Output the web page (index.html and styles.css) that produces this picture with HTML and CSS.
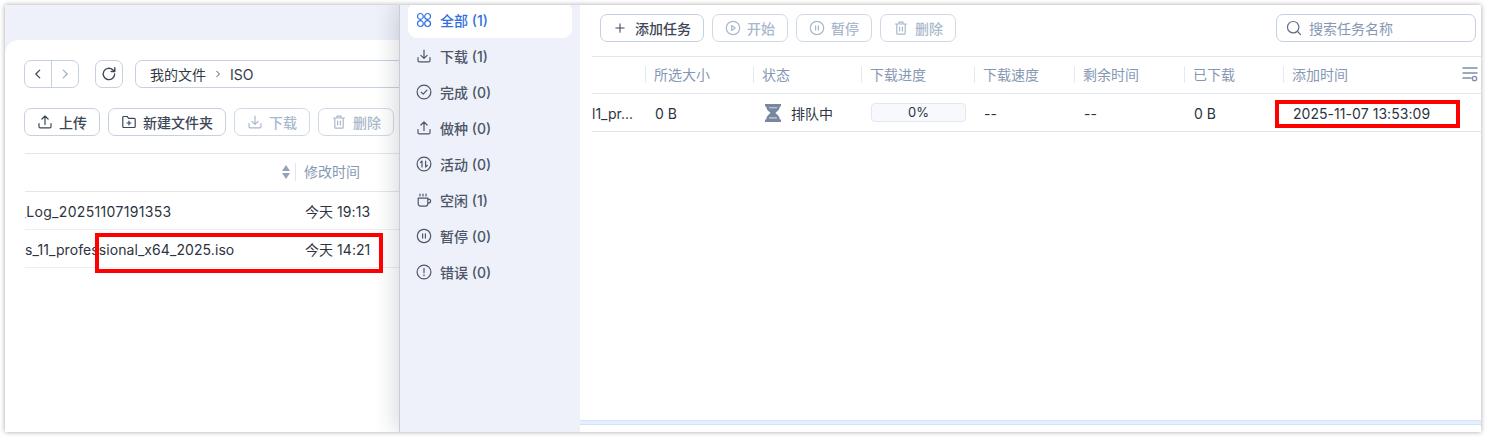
FILE: index.html
```html
<!DOCTYPE html>
<html lang="zh">
<head>
<meta charset="utf-8">
<title>下载任务</title>
<link rel="stylesheet" href="styles.css">
</head>
<body>
<svg class="defs" width="0" height="0" aria-hidden="true">
  <symbol id="i-upload" viewBox="0 0 16 16"><path d="M8 10.500V2.200M4.900 5 8 2l3.100 3M2 9.500v3.200c0 .7.5 1.200 1.200 1.200h9.600c.7 0 1.200-.5 1.200-1.200V9.500"/></symbol>
  <symbol id="i-download" viewBox="0 0 16 16"><path d="M8 2v8.300M4.900 7.400 8 10.400l3.100-3M2 9.500v3.200c0 .7.5 1.200 1.200 1.200h9.600c.7 0 1.200-.5 1.200-1.200V9.500"/></symbol>
  <symbol id="i-trash" viewBox="0 0 16 16"><path d="M2.500 4h11M6 4V2.200h4V4M3.800 4v9.200c0 .5.4.9.9.9h6.600c.5 0 .9-.4.9-.9V4M6.600 7v4M9.400 7v4"/></symbol>
  <symbol id="i-pause" viewBox="0 0 16 16"><circle cx="8" cy="8" r="6.700"/><path d="M6.600 5.900v4.200M9.400 5.900v4.200"/></symbol>
</svg>
<div class="frame">
  <section class="files">
    <div class="files-card">
      <div class="nav-row">
        <div class="nav-pair">
          <span class="nav-btn"><svg class="ico" viewBox="0 0 16 16"><path class="dark" d="M10 3.500 5.500 8l4.500 4.500"/></svg></span>
          <span class="nav-btn nav-next"><svg class="ico" viewBox="0 0 16 16"><path class="faint" d="M6 3.500 10.500 8 6 12.500"/></svg></span>
        </div>
        <span class="reload"><svg class="ico" viewBox="0 0 16 16"><path class="dark" d="M13.600 8A5.700 5.700 0 1 1 11.700 3.700L13.600 5.300M13.800 1.800v3.700h-3.600"/></svg></span>
        <div class="path"><span>我的文件</span><svg class="crumb" viewBox="0 0 8 8"><path d="M2.500 1 5.500 4l-3 3"/></svg><span>ISO</span></div>
      </div>
      <div class="btn-row">
        <span class="btn"><svg class="ico"><use href="#i-upload"/></svg>上传</span>
        <span class="btn"><svg class="ico" viewBox="0 0 16 16"><path d="M1.800 3.400c0-.5.4-.9.9-.9h3.400l1.500 1.800h5.700c.5 0 .9.4.9.9v7.400c0 .5-.4.9-.9.9H2.700c-.5 0-.9-.4-.9-.9zM8 7v4M6 9h4"/></svg>新建文件夹</span>
        <span class="btn off"><svg class="ico"><use href="#i-download"/></svg>下载</span>
        <span class="btn off"><svg class="ico"><use href="#i-trash"/></svg>删除</span>
      </div>
      <div class="file-table">
        <div class="file-head">
          <span class="sort"><i class="up"></i><i class="down"></i></span>
          <span class="file-time-head">修改时间</span>
        </div>
        <div class="file-row">
          <div class="file-name name-log"><span>_Log_20251107191353</span></div>
          <span class="file-time">今天 19:13</span>
        </div>
        <div class="file-row">
          <div class="file-name name-iso"><span>s_11_professional_x64_2025.iso</span></div>
          <span class="file-time">今天 14:21</span>
        </div>
      </div>
    </div>
    <div class="mark mark-file"></div>
  </section>

  <section class="tasks">
    <aside class="side">
      <a class="side-item on"><svg class="ico" viewBox="0 0 16 16"><circle cx="4.400" cy="4.400" r="2.900"/><circle cx="11.600" cy="4.400" r="2.900"/><circle cx="4.400" cy="11.600" r="2.900"/><circle cx="11.600" cy="11.600" r="2.900"/></svg><span>全部 (1)</span></a>
      <a class="side-item"><svg class="ico"><use href="#i-download"/></svg><span>下载 (1)</span></a>
      <a class="side-item"><svg class="ico" viewBox="0 0 16 16"><circle cx="8" cy="8" r="6.900"/><path d="M5.200 8.200 7.200 10.200 10.900 6.200"/></svg><span>完成 (0)</span></a>
      <a class="side-item"><svg class="ico"><use href="#i-upload"/></svg><span>做种 (0)</span></a>
      <a class="side-item"><svg class="ico" viewBox="0 0 16 16"><circle cx="8" cy="8" r="6.900"/><path d="M6 11V5L4.500 6.400M9.600 5v6l1.800-1.600"/></svg><span>活动 (0)</span></a>
      <a class="side-item"><svg class="ico" viewBox="0 0 16 16"><path d="M2.200 6.200h9.600v5.600c0 1.300-1 2.300-2.300 2.300h-5c-1.300 0-2.300-1-2.300-2.300zM11.800 7.200h.8c1.200 0 2 .8 2 1.900s-.8 2-2 2h-.8M4 2v2M7 2v2M10 2v2"/></svg><span>空闲 (1)</span></a>
      <a class="side-item"><svg class="ico"><use href="#i-pause"/></svg><span>暂停 (0)</span></a>
      <a class="side-item"><svg class="ico" viewBox="0 0 16 16"><circle cx="8" cy="8" r="6.900"/><path d="M8 4.400v4.400M8 10.800v.9"/></svg><span>错误 (0)</span></a>
    </aside>
    <main class="main">
      <div class="tool-row">
        <span class="btn add"><svg class="ico plus" viewBox="0 0 16 16"><path d="M8 2.500v11M2.500 8h11"/></svg>添加任务</span>
        <span class="btn off"><svg class="ico" viewBox="0 0 16 16"><circle cx="8" cy="8" r="6.700"/><path d="M6.600 5.600 10.200 8l-3.600 2.400z"/></svg>开始</span>
        <span class="btn off"><svg class="ico"><use href="#i-pause"/></svg>暂停</span>
        <span class="btn off"><svg class="ico"><use href="#i-trash"/></svg>删除</span>
        <div class="search"><svg class="ico" viewBox="0 0 16 16"><circle cx="7.200" cy="7.200" r="5.700"/><path d="M11.500 11.500 14.500 14.500"/></svg>搜索任务名称</div>
      </div>
      <div class="task-grid task-head">
        <span class="h-name"></span>
        <span class="th">所选大小</span>
        <span class="th">状态</span>
        <span class="th">下载进度</span>
        <span class="th">下载速度</span>
        <span class="th">剩余时间</span>
        <span class="th">已下载</span>
        <span class="th last">添加时间
          <svg class="columns" viewBox="0 0 16 16"><path d="M.5 2h15M.5 7h15M.5 12h9"/><circle cx="12.500" cy="12.500" r="2.200"/></svg>
        </span>
      </div>
      <div class="task-grid task-row">
        <div class="task-name"><span>l1_pr...</span></div>
        <span class="td">0 B</span>
        <span class="td state"><svg class="hourglass" viewBox="0 0 16 18"><path d="M0 0h16v2.600h-1.200c0 3-2.400 4.600-4.400 6.400 2 1.800 4.400 3.400 4.400 6.400H16V18H0v-2.600h1.200c0-3 2.400-4.600 4.400-6.400-2-1.800-4.400-3.400-4.400-6.400H0z"/><path class="sand" d="M4.600 13.200h6.800l.9 1.400H3.700zM3.800 3.200h8.400l-.5 1H4.300z"/></svg>排队中</span>
        <span class="td prog"><span class="bar">0%</span></span>
        <span class="td">--</span>
        <span class="td">--</span>
        <span class="td">0 B</span>
        <span class="td date">2025-11-07 13:53:09</span>
      </div>
      <div class="h-scroll"></div>
    </main>
    <div class="mark mark-date"></div>
  </section>
</div>
</body>
</html>
```

FILE: styles.css
```css
* { box-sizing: border-box; }
html, body { margin: 0; height: 100%; background: #fff; overflow: hidden; }
body {
  font-family: Inter, "Noto Sans CJK SC", "Noto Sans", sans-serif;
  font-size: 14px;
  color: #2d3340;
}
.defs { position: absolute; }
.frame {
  margin: 5px;
  width: 1476px;
  height: 427px;
  display: flex;
  background: #eef1f9;
  box-shadow: 0 0 5px rgba(0, 0, 0, .35);
  overflow: hidden;
  position: relative;
}
.ico {
  width: 16px;
  height: 16px;
  flex: none;
  fill: none;
  stroke: currentColor;
  stroke-width: 1.2;
  stroke-linecap: round;
  stroke-linejoin: round;
}

/* file panel */
.files { width: 394px; flex: none; padding-top: 35px; position: relative; }
.files-card {
  background: #fff;
  height: 100%;
  border-top-left-radius: 14px;
  padding: 20px 0 0 19px;
}
.nav-row { display: flex; height: 28px; width: 600px; }
.nav-pair {
  display: flex;
  width: 55px;
  border: 1px solid #c5d0e0;
  border-radius: 7px;
  margin-right: 16px;
}
.nav-btn { flex: 1; display: flex; align-items: center; justify-content: center; }
.nav-btn .ico { width: 14px; height: 14px; }
.nav-next { border-left: 1px solid #c5d0e0; }
.dark { stroke: #3d4657; stroke-width: 1.4; }
.faint { stroke: #9fb0c8; stroke-width: 1.4; }
.reload {
  width: 28px;
  border: 1px solid #c5d0e0;
  border-radius: 7px;
  margin-right: 12px;
  display: flex;
  align-items: center;
  justify-content: center;
}
.path {
  flex: 1;
  border: 1px solid #c5d0e0;
  border-radius: 7px;
  padding-left: 14px;
  display: flex;
  align-items: center;
  color: #333a47;
}
.crumb { width: 8px; height: 8px; margin: 0 8px; fill: none; stroke: #4a5364; stroke-width: 1; }

.btn-row { display: flex; gap: 8px; margin-top: 20px; }
.btn {
  height: 28px;
  display: inline-flex;
  align-items: center;
  gap: 6px;
  padding: 0 12px;
  border: 1px solid #c5d0e0;
  border-radius: 7px;
  font-weight: 500;
  color: #3d4657;
  background: #fff;
  white-space: nowrap;
}
.btn.off { color: #a9b8cc; border-color: #d0d9e6; }

.file-table { margin: 17px 0 0 1px; width: 400px; }
.file-head {
  height: 39px;
  border-top: 1px solid #e1e5ee;
  border-bottom: 1px solid #e1e5ee;
  display: flex;
  align-items: center;
  padding: 0 0 2px 257px;
  color: #8698b3;
}
.sort { width: 9px; display: flex; flex-direction: column; gap: 2px; margin-right: 4px; }
.sort i { display: block; width: 0; height: 0; border-left: 4px solid transparent; border-right: 4px solid transparent; }
.sort .up { border-bottom: 6px solid #93a3bb; }
.sort .down { border-top: 6px solid #93a3bb; }
.file-time-head { border-left: 1px solid #e1e5ee; padding-left: 8px; line-height: 18px; }
.file-row {
  height: 38px;
  border-bottom: 1px solid #eceff4;
  display: flex;
  align-items: center;
}
.file-name {
  width: 280px;
  flex: none;
  padding-top: 1px;
  white-space: nowrap;
  overflow: hidden;
}
.name-log { letter-spacing: .33px; text-indent: -6px; }
.name-iso { letter-spacing: .08px; }
.file-time { white-space: nowrap; letter-spacing: .05px; }

.mark { position: absolute; border: 4px solid #f00; z-index: 5; }
.mark-file { left: 90px; top: 228px; width: 288px; height: 40px; }
.mark-date { left: 875px; top: 95px; width: 185px; height: 28px; }

/* task window */
.tasks {
  width: 1082px;
  flex: none;
  display: flex;
  position: relative;
  background: #fff;
  border-left: 1px solid #c9ccd3;
  box-shadow: -4px 0 20px rgba(40, 50, 70, .18);
}
.side { width: 180px; flex: none; background: #eef1f9; padding: 0 8px; margin-top: -3px; }
.side-item {
  height: 36px;
  display: flex;
  align-items: center;
  gap: 8px;
  padding: 0 0 1px 8px;
  color: #4c5668;
  font-weight: 500;
  border-radius: 9px;
  white-space: nowrap;
}
.side-item.on { background: #fff; color: #2f6fe0; }

.main { flex: 1; position: relative; min-width: 0; }
.tool-row {
  height: 52px;
  margin-left: 12px;
  display: flex;
  gap: 8px;
  padding: 9px 5px 0 8px;
  border-bottom: 1px solid #e1e5ee;
}
.add { width: 104px; gap: 9px; padding-bottom: 1px; }
.plus { width: 12px; height: 12px; margin-left: 1px; stroke-width: 1.4; }
.search {
  margin-left: auto;
  width: 200px;
  height: 28px;
  border: 1px solid #c5d0e0;
  border-radius: 7px;
  display: flex;
  align-items: center;
  gap: 7px;
  padding: 0 0 1px 9px;
  color: #8698b3;
}
.search .ico { stroke: #5f6f88; }

.task-grid {
  margin-left: 12px;
  display: grid;
  grid-template-columns: 53px 108px 108px 113px 100px 110px 99px 1fr;
  border-bottom: 1px solid #e1e5ee;
}
.task-head { height: 37px; align-items: center; color: #8698b3; padding-bottom: 2px; }
.th {
  border-left: 1px solid #e6e9f0;
  padding-left: 8px;
  line-height: 17px;
  white-space: nowrap;
}
.th.last { display: flex; justify-content: space-between; align-items: center; padding-right: 3px; }
.columns { width: 16px; height: 16px; fill: none; stroke: #7d8ea8; stroke-width: 1.3; }
.task-row { height: 38px; align-items: center; }
.task-name { padding-top: 2px; overflow: hidden; white-space: nowrap; }
.td { padding: 2px 0 0 10px; white-space: nowrap; letter-spacing: .05px; }
.state { display: flex; align-items: center; gap: 10px; padding: 0 0 0 12px; }
.hourglass { width: 16px; height: 18px; fill: #76879f; flex: none; }
.hourglass .sand { fill: #cdd5e0; }
.prog { padding: 0 0 0 10px; }
.bar {
  display: block;
  width: 95px;
  height: 19px;
  line-height: 17px;
  font-size: 13px;
  text-align: center;
  border: 1px solid #e3e7ef;
  border-radius: 4px;
  background: #f8f9fc;
}
.h-scroll {
  position: absolute;
  left: 0;
  right: 0;
  top: 415px;
  height: 5px;
  background: #e6f0fd;
  border-top: 1px solid #d3e4fa;
  border-bottom: 1px solid #d3e4fa;
}
```
